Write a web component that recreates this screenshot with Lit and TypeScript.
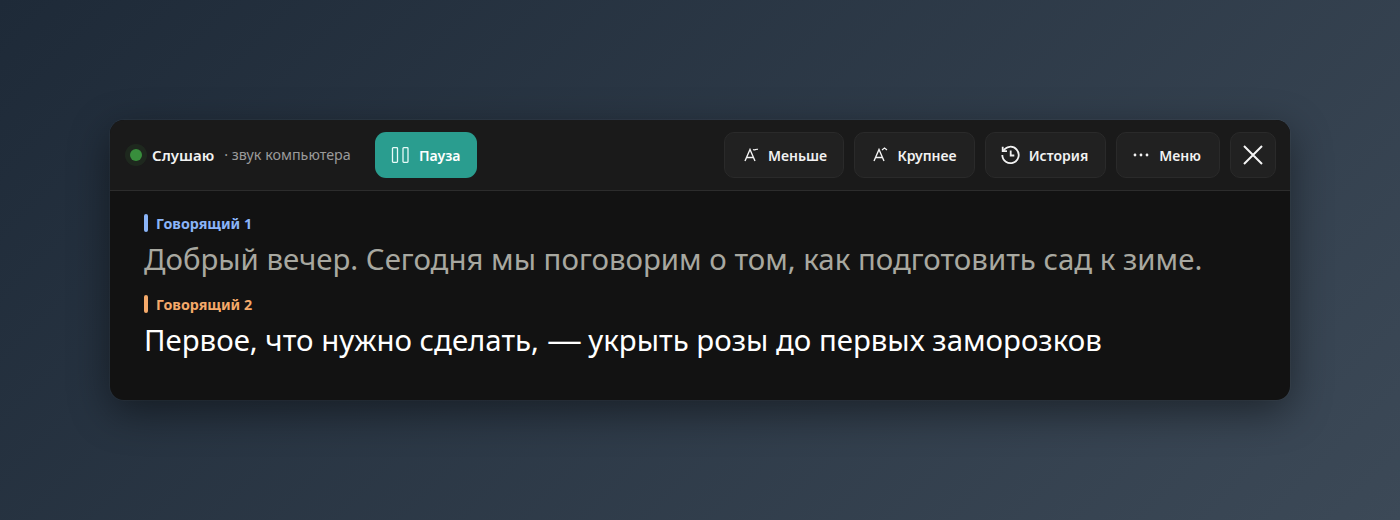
import { LitElement, html, css } from "lit";
import { customElement } from "lit/decorators.js";

@customElement("app-root")
export class AppRoot extends LitElement {
  static styles = css`
    :host {
      display: flex;
      align-items: center;
      justify-content: center;
      width: 1400px;
      height: 520px;
      box-sizing: border-box;
      background: linear-gradient(135deg, #1e2a38 0%, #3c4957 100%);
      font-family: "Noto Sans", "Open Sans", sans-serif;
      overflow: hidden;
    }
    .card {
      width: 1180px;
      height: 280px;
      box-sizing: border-box;
      background: #121212;
      border-radius: 14px;
      overflow: hidden;
      box-shadow: 0 12px 40px rgba(0, 0, 0, 0.45), 0 0 0 1px rgba(255, 255, 255, 0.04);
    }
    .bar {
      height: 71px;
      box-sizing: border-box;
      display: flex;
      align-items: center;
      padding: 0 14px 1px 15px;
      background: #1a1a1a;
      border-bottom: 1px solid #2c2c2c;
    }
    .dot-wrap {
      width: 22px;
      height: 22px;
      border-radius: 50%;
      background: rgba(62, 142, 65, 0.13);
      display: flex;
      align-items: center;
      justify-content: center;
    }
    .dot {
      width: 12px;
      height: 12px;
      border-radius: 50%;
      background: #388e3c;
    }
    .state {
      margin-left: 5px;
      font-size: 15px;
      font-weight: 600;
      color: #f2f2f2;
    }
    .source {
      margin-left: 10px;
      font-size: 14.3px;
      color: #9a9a9a;
    }
    .btn {
      height: 46px;
      box-sizing: border-box;
      display: flex;
      align-items: center;
      justify-content: center;
      gap: 9px;
      border-radius: 10px;
      font-size: 14px;
      font-weight: 600;
      color: #f2f2f2;
      background: #212121;
      border: 1px solid #2a2a2a;
    }
    .label { position: relative; top: 1px; }
    .pause {
      margin-left: 24px;
      width: 102px;
      background: #2a9d8f;
      border: none;
      gap: 10px;
      color: #fff;
      border-radius: 11px;
      font-size: 14.1px;
    }
    .spacer { flex: 1; }
    .tools { display: flex; gap: 10px; }
    .smaller { width: 120px; padding-left: 2px; }
    .larger { width: 121px; }
    .history { width: 121px; gap: 8px; padding-right: 2px; }
    .menu { width: 104px; gap: 10px; padding-right: 2px; }
    .close { width: 46px; }
    svg { display: block; flex: none; }
    .body {
      padding: 23px 34px 0 34px;
    }
    .speaker {
      display: flex;
      align-items: center;
      gap: 8px;
      height: 18px;
      font-size: 14.3px;
      font-weight: 700;
    }
    .speaker span { position: relative; top: 0.5px; }
    .speaker i {
      width: 4px;
      height: 18px;
      border-radius: 2px;
      background: currentColor;
    }
    .s1 { color: #8ab4f8; }
    .s2 { color: #f4a96a; }
    .line {
      font-size: 29.4px;
      line-height: 38px;
      margin: 8px 0 17px;
      white-space: nowrap;
    }
    .old { color: #a8a8a0; }
    .live { color: #ffffff; }
    .dash {
      display: inline-block;
      transform: scaleX(1.19);
      transform-origin: left center;
      margin-right: 4.600px;
    }
  `;

  render() {
    return html`
      <div class="card">
        <div class="bar">
          <span class="dot-wrap"><span class="dot"></span></span>
          <span class="state">Слушаю</span>
          <span class="source">· звук компьютера</span>
          <div class="btn pause">
            <svg width="18" height="16" viewBox="0 0 18 16" fill="none" stroke="#e8fbf8" stroke-width="1.3">
              <rect x="1.500" y="0.7" width="5" height="14.6" rx="0.8" />
              <rect x="12" y="0.7" width="5" height="14.6" rx="0.8" />
            </svg>
            <span class="label">Пауза</span>
          </div>
          <div class="spacer"></div>
          <div class="tools">
            <div class="btn smaller">
              <svg width="16" height="16" viewBox="0 0 16 16" fill="none" stroke="#f2f2f2" stroke-width="1.4">
                <path d="M2 14 7 2.500 12 14M3.600 10.500h6.800" />
                <path d="M10 2.600c1.500 1 3-.9 5-.2" stroke-width="1.200" />
              </svg>
              <span class="label">Меньше</span>
            </div>
            <div class="btn larger">
              <svg width="16" height="16" viewBox="0 0 16 16" fill="none" stroke="#f2f2f2" stroke-width="1.4">
                <path d="M2 14 7 2.500 12 14M3.600 10.500h6.800" />
                <path d="M10 3 12.500 1 15 3" stroke-width="1.200" />
              </svg>
              <span class="label">Крупнее</span>
            </div>
            <div class="btn history">
              <svg width="20" height="20" viewBox="0 0 20 20" fill="none" stroke="#f2f2f2" stroke-width="1.800">
                <path d="M2.300 6A8.200 8.200 0 1 1 1.300 10" />
                <path d="M1.700 1.800v4.300h4.300" />
                <path d="M9.700 5.500v5h3.600" />
              </svg>
              <span class="label">История</span>
            </div>
            <div class="btn menu">
              <svg width="16" height="6" viewBox="0 0 16 6" fill="#f2f2f2">
                <circle cx="2" cy="3" r="1.400" />
                <circle cx="8" cy="3" r="1.400" />
                <circle cx="14" cy="3" r="1.400" />
              </svg>
              <span class="label">Меню</span>
            </div>
            <div class="btn close">
              <svg width="20" height="20" viewBox="0 0 20 20" fill="none" stroke="#f5f5f5" stroke-width="2">
                <path d="M1 1 19 19M19 1 1 19" />
              </svg>
            </div>
          </div>
        </div>
        <div class="body">
          <div class="speaker s1"><i></i><span>Говорящий 1</span></div>
          <div class="line old">Добрый вечер. Сегодня мы поговорим о том, как подготовить сад к зиме.</div>
          <div class="speaker s2"><i></i><span>Говорящий 2</span></div>
          <div class="line live">Первое, что нужно сделать, <span class="dash">—</span> укрыть розы до первых заморозков</div>
        </div>
      </div>
    `;
  }
}
